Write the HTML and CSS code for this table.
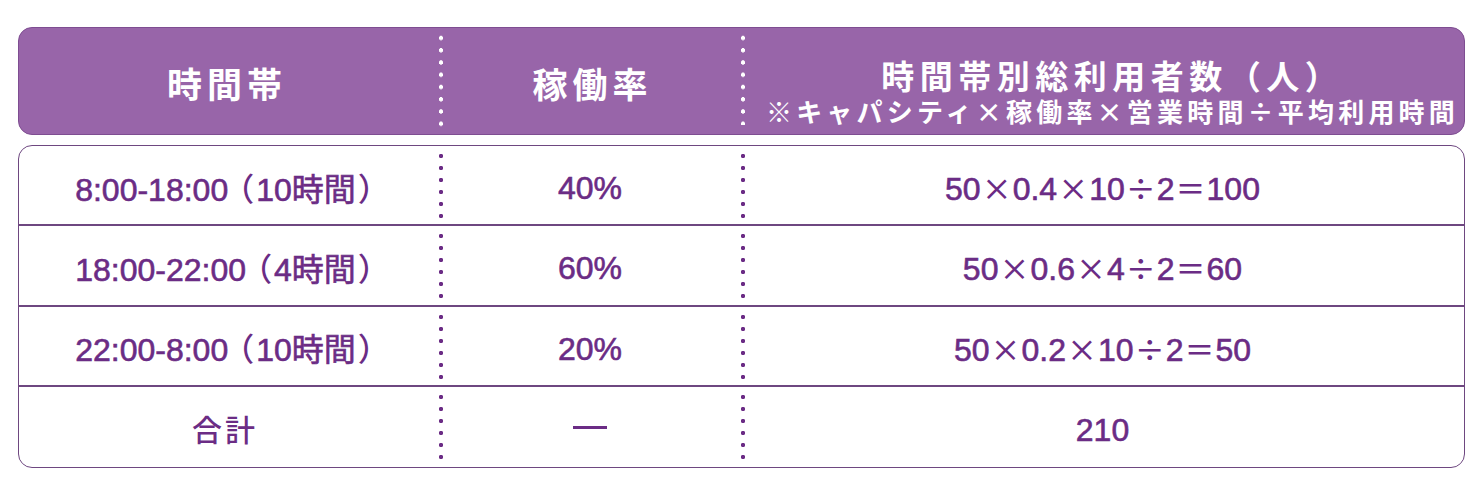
FILE: index.html
```html
<!DOCTYPE html>
<html lang="ja">
<head>
<meta charset="utf-8">
<link rel="stylesheet" href="styles.css">
</head>
<body>
<div class="wrap">
  <div class="head">
    <div class="hcell c1"><span class="htitle">時間帯</span></div>
    <div class="hcell c2 dots-w"><span class="htitle">稼働率</span></div>
    <div class="hcell c3 dots-w">
      <span class="htitle">時間帯別総利用者数（人）</span>
      <span class="hsub">※キャパシティ×稼働率×営業時間÷平均利用時間</span>
    </div>
  </div>
  <div class="body">
    <div class="row">
      <div class="cell first"><span class="t">8:00-18:00<span class="par po">（</span>10時間<span class="par pc">）</span></span></div>
      <div class="cell dots-p"><span class="t">40%</span></div>
      <div class="cell dots-p"><span class="t">50<span class="op">×</span>0.4<span class="op">×</span>10<span class="op">÷</span>2<span class="op">＝</span>100</span></div>
    </div>
    <div class="row">
      <div class="cell first"><span class="t">18:00-22:00<span class="par po">（</span>4時間<span class="par pc">）</span></span></div>
      <div class="cell dots-p"><span class="t">60%</span></div>
      <div class="cell dots-p"><span class="t">50<span class="op">×</span>0.6<span class="op">×</span>4<span class="op">÷</span>2<span class="op">＝</span>60</span></div>
    </div>
    <div class="row">
      <div class="cell first"><span class="t">22:00-8:00<span class="par po">（</span>10時間<span class="par pc">）</span></span></div>
      <div class="cell dots-p"><span class="t">20%</span></div>
      <div class="cell dots-p"><span class="t">50<span class="op">×</span>0.2<span class="op">×</span>10<span class="op">÷</span>2<span class="op">＝</span>50</span></div>
    </div>
    <div class="row">
      <div class="cell first"><span class="t cjk">合計</span></div>
      <div class="cell dots-p"><span class="dash"></span></div>
      <div class="cell dots-p"><span class="t">210</span></div>
    </div>
  </div>
</div>
</body>
</html>
```

FILE: styles.css
```css
html, body {
  margin: 0;
  padding: 0;
  background: #ffffff;
}
body {
  font-family: "Liberation Sans", "Noto Sans CJK JP", sans-serif;
}
.wrap {
  width: 1447px;
  margin: 27px 0 0 18px;
}
.head {
  height: 108px;
  box-sizing: border-box;
  background: #9865a9;
  border: 1px solid #7e4d91;
  border-radius: 14px;
  display: grid;
  grid-template-columns: 420px 302px 1fr;
  color: #ffffff;
  font-family: "Noto Sans CJK JP", sans-serif;
  font-weight: 700;
}
.hcell {
  display: flex;
  flex-direction: column;
  align-items: center;
  justify-content: center;
  padding: 4px 0;
}
.htitle {
  display: block;
  font-size: 35px;
  letter-spacing: 5px;
  line-height: 40px;
  margin-right: -5px;
}
.c1 .htitle {
  padding-top: 4px;
  margin-right: 4px;
}
.c2 .htitle {
  padding-top: 4px;
}
.c3 {
  justify-content: flex-end;
  padding-bottom: 9px;
}
.c3 .htitle {
  font-size: 33px;
  letter-spacing: 5.5px;
  margin-right: -5.5px;
  margin-left: 14px;
  line-height: 33px;
  margin-bottom: 5px;
}
.hsub {
  display: block;
  font-size: 26px;
  letter-spacing: 4.2px;
  line-height: 28px;
  margin-right: -4px;
  margin-left: 16px;
}
.dots-w {
  background-image: radial-gradient(circle at 2px 6px, #ffffff 1.9px, rgba(255,255,255,0) 2.4px);
  background-size: 4px 12.25px;
  background-repeat: repeat-y;
  background-position: left top;
  background-origin: content-box;
  background-clip: content-box;
}
.body {
  margin-top: 10px;
  height: 323px;
  box-sizing: border-box;
  border: 1px solid #6e4780;
  border-radius: 14px;
  display: grid;
  grid-template-rows: 1fr 1fr 1fr 1fr;
  color: #6b2c85;
  overflow: hidden;
}
.row {
  display: grid;
  grid-template-columns: 420px 302px 1fr;
  border-bottom: 2px solid #6e4780;
}
.row:last-child {
  border-bottom: none;
}
.cell {
  display: flex;
  align-items: center;
  justify-content: center;
  font-size: 32px;
  padding: 4px 0;
  -webkit-text-stroke: 0.6px #6b2c85;
  line-height: 40px;
}
.first {
  padding-right: 8px;
}
.t {
  display: block;
  padding-top: 6px;
  white-space: nowrap;
}
.par {
  font-family: "Noto Sans CJK JP", sans-serif;
  font-feature-settings: "palt";
  -webkit-text-stroke: 0;
  font-weight: 500;
}
.po {
  margin: 0 3px 0 9px;
}
.pc {
  margin: 0 0 0 3px;
}
.cjk {
  font-family: "Noto Sans CJK JP", sans-serif;
  font-weight: 500;
  font-size: 30px;
  letter-spacing: 3px;
  -webkit-text-stroke: 0;
  padding-top: 2px;
}
.op {
  font-family: "Noto Sans CJK JP", sans-serif;
  -webkit-text-stroke: 0;
  font-weight: 500;
  font-size: 30px;
  margin: 0 1px;
}
.dash {
  display: block;
  width: 34px;
  height: 3px;
  margin-top: 2px;
  background: #6b2c85;
}
.dots-p {
  background-image: radial-gradient(circle at 2px 6px, #6b2c85 1.9px, rgba(107,44,133,0) 2.4px);
  background-size: 4px 12px;
  background-repeat: repeat-y;
  background-position: left top;
  background-origin: content-box;
  background-clip: content-box;
}
```
